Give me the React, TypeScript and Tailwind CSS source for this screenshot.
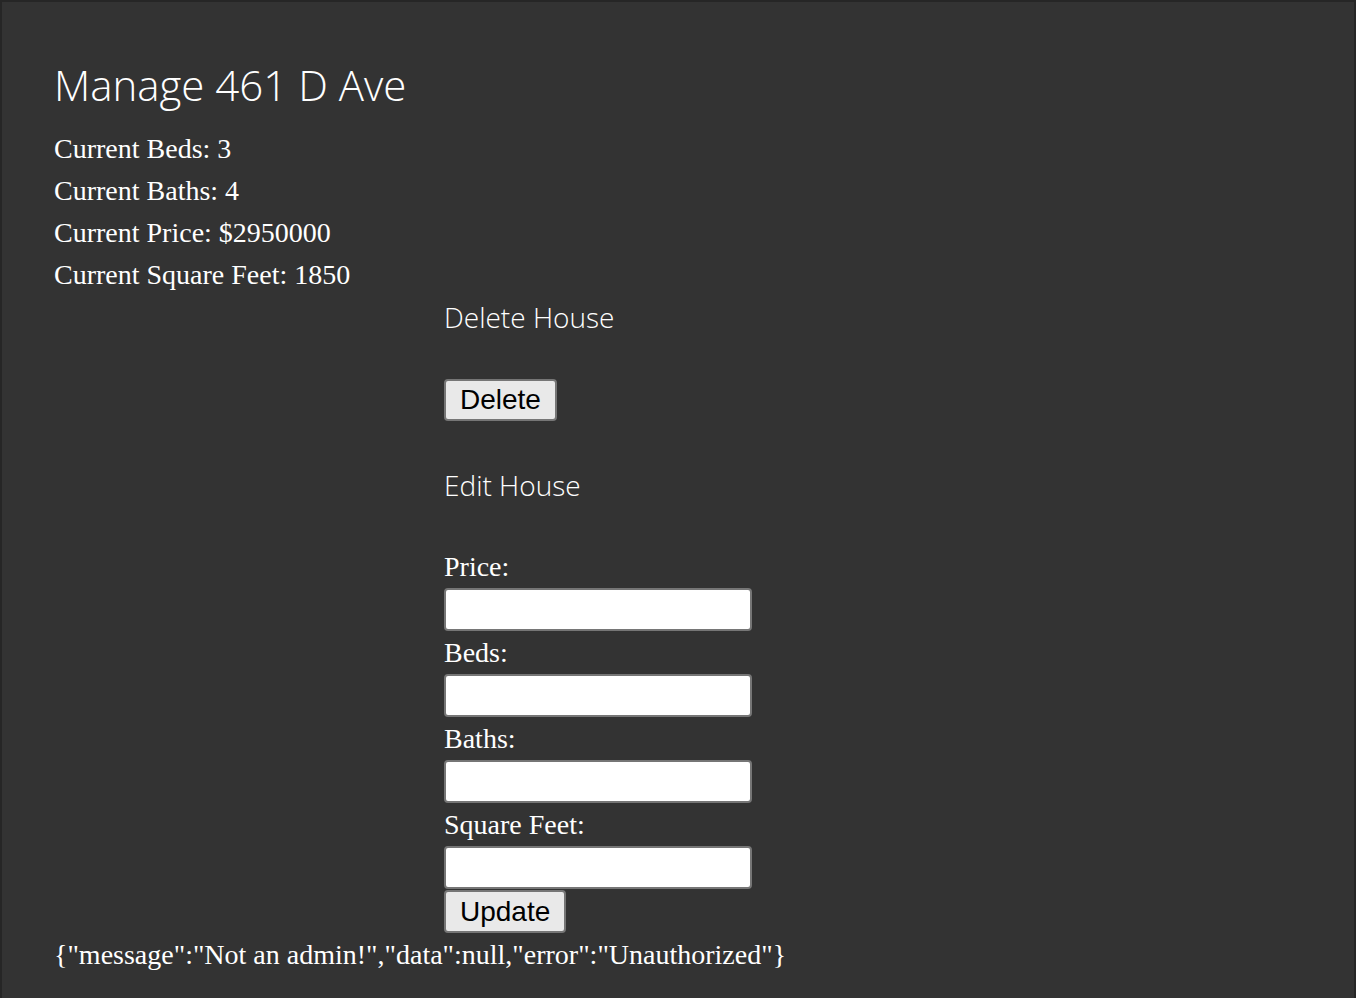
import React from 'react';

const serif = 'font-["Liberation_Serif","Times_New_Roman",serif]';

function Field({ label }: { label: string }) {
  return (
    <div>
      <label className={`block h-[43px] text-[28px] leading-[43px] text-white ${serif}`}>{label}</label>
      <input
        type="text"
        className="box-border block h-[43px] w-[308px] rounded-[4px] border-2 border-[#767676] bg-white px-2 text-[20px] text-black"
      />
    </div>
  );
}

export default function App() {
  return (
    <div className="min-h-[998px] border-2 border-b-0 border-[#262626] bg-[#333333] pl-[52px] pt-[55px]">
      {/* Header */}
      <h1 className='h-[56px] text-[42px] font-light leading-[56px] text-white font-["Open_Sans",sans-serif]'>
        Manage 461 D Ave
      </h1>
      <div className={`mt-[15px] text-[28px] leading-[42px] text-white ${serif}`}>
        <p>Current Beds: 3</p>
        <p>Current Baths: 4</p>
        <p>Current Price: $2950000</p>
        <p>Current Square Feet: 1850</p>
      </div>

      {/* Manage forms */}
      <div className="ml-[390px]">
        <h2 className='h-[42px] text-[28px] font-light leading-[42px] text-white font-["Open_Sans",sans-serif]'>
          Delete House
        </h2>
        <button className='mt-[41px] block h-[42px] rounded-[4px] border-2 border-[#767676] bg-[#e9e9e9] px-[14px] text-[28px] leading-none text-black font-["Liberation_Sans",Arial,sans-serif]'>
          Delete
        </button>
        <h2 className='mt-[43px] h-[42px] text-[28px] font-light leading-[42px] text-white font-["Open_Sans",sans-serif]'>
          Edit House
        </h2>
        <div className="mt-[39px]">
          <Field label="Price:" />
          <Field label="Beds:" />
          <Field label="Baths:" />
          <Field label="Square Feet:" />
          <button className='mt-[1px] block h-[43px] rounded-[4px] border-2 border-[#767676] bg-[#e9e9e9] px-[14px] text-[28px] leading-none text-black font-["Liberation_Sans",Arial,sans-serif]'>
            Update
          </button>
        </div>
      </div>

      <p className={`mt-[1px] h-[42px] text-[28px] leading-[42px] text-white ${serif}`}>
        {'{"message":"Not an admin!","data":null,"error":"Unauthorized"}'}
      </p>
    </div>
  );
}
